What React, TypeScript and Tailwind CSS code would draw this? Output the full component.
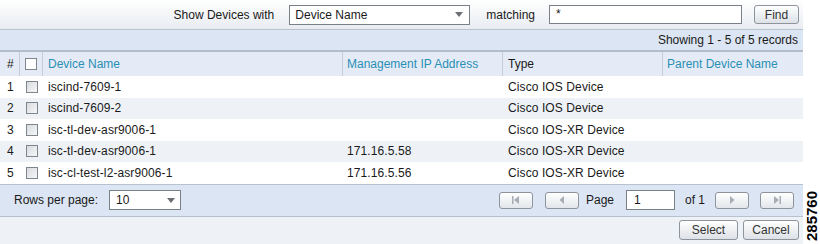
import React from "react";

const font = { fontFamily: '"Liberation Sans", Arial, sans-serif' };

function Caret() {
  return (
    <svg width="8" height="5" viewBox="0 0 8 5" className="shrink-0">
      <path d="M0 0 L8 0 L4 5 Z" fill="#6b6f75" />
    </svg>
  );
}

function Checkbox({ header }: { header?: boolean }) {
  return (
    <div
      className={
        "w-[12px] h-[12px] border border-[#7f858c] " +
        (header ? "bg-white" : "bg-gradient-to-br from-[#d8dbdf] to-[#f6f7f8]")
      }
    />
  );
}

function PagerBtn({ kind }: { kind: "first" | "prev" | "next" | "last" }) {
  return (
    <div className="w-[34px] h-[17px] rounded-[3px] border border-[#8d949c] bg-gradient-to-b from-[#ffffff] to-[#e3e6ea] flex items-center justify-center">
      <svg width="10" height="8" viewBox="0 0 10 8">
        {kind === "first" && (
          <>
            <rect x="1" y="0" width="1.5" height="8" fill="#a7adb5" />
            <path d="M8 0 L8 8 L3 4 Z" fill="#a7adb5" />
          </>
        )}
        {kind === "prev" && <path d="M7 0 L7 8 L2.5 4 Z" fill="#a7adb5" />}
        {kind === "next" && <path d="M3 0 L3 8 L7.5 4 Z" fill="#a7adb5" />}
        {kind === "last" && (
          <>
            <path d="M2 0 L2 8 L7 4 Z" fill="#a7adb5" />
            <rect x="7.5" y="0" width="1.5" height="8" fill="#a7adb5" />
          </>
        )}
      </svg>
    </div>
  );
}

const rows = [
  { n: 1, name: "iscind-7609-1", ip: "", type: "Cisco IOS Device" },
  { n: 2, name: "iscind-7609-2", ip: "", type: "Cisco IOS Device" },
  { n: 3, name: "isc-tl-dev-asr9006-1", ip: "", type: "Cisco IOS-XR Device" },
  { n: 4, name: "isc-tl-dev-asr9006-1", ip: "171.16.5.58", type: "Cisco IOS-XR Device" },
  { n: 5, name: "isc-cl-test-l2-asr9006-1", ip: "171.16.5.56", type: "Cisco IOS-XR Device" },
];

const cols = "grid grid-cols-[20px_23px_300px_160px_160px_140px]";

export default function App() {
  return (
    <div className="w-[820px] h-[244px] bg-white flex text-[12px] text-[#1a1a1a]" style={font}>
      <div className="w-[803px] flex flex-col">
        {/* search bar */}
        <div className="h-[29px] bg-gradient-to-b from-[#ffffff] to-[#e8ecf1] flex items-center justify-end pr-[4px]">
          <span className="mr-[15px]">Show Devices with</span>
          <div className="w-[181px] h-[20px] border border-[#7a8088] bg-white flex items-center justify-between pl-[5px] pr-[6px]">
            <span>Device Name</span>
            <Caret />
          </div>
          <span className="ml-[16px] mr-[14px]">matching</span>
          <div className="w-[193px] h-[19px] border border-[#7a8088] bg-white pl-[6px] leading-[17px]">*</div>
          <div className="ml-[12px] w-[45px] h-[19px] rounded-[3px] border border-[#8d949c] bg-gradient-to-b from-[#ffffff] to-[#dde1e6] flex items-center justify-center text-[#333]">
            Find
          </div>
        </div>
        {/* showing bar */}
        <div className="h-[23px] bg-[#dce5f3] border-t border-[#b8c2ce] border-b-2 border-b-[#b3bdc9] flex items-center justify-end pr-[5px]">
          Showing 1 - 5 of 5 records
        </div>
        {/* header */}
        <div className={cols + " h-[24px] bg-[#e4ebf6] text-[#2a8fb5]"}>
          <div className="flex items-center pl-[7px] text-[#1a1a1a] border-r border-[#c3ccd8]">#</div>
          <div className="flex items-center justify-center border-r border-[#c3ccd8]">
            <Checkbox header />
          </div>
          <div className="flex items-center pl-[5px] border-r border-[#c3ccd8]">Device Name</div>
          <div className="flex items-center pl-[4px] border-r border-[#c3ccd8]">Management IP Address</div>
          <div className="flex items-center pl-[5px] text-[#1a1a1a] border-r border-[#c3ccd8]">Type</div>
          <div className="flex items-center pl-[4px]">Parent Device Name</div>
        </div>
        {/* rows */}
        {rows.map((r, i) => (
          <div
            key={r.n}
            className={cols + " h-[21.5px] tracking-[0.1px] " + (i % 2 === 0 ? "bg-white" : "bg-[#eef2f7]")}
          >
            <div className="flex items-center pl-[7px]">{r.n}</div>
            <div className="flex items-center justify-center">
              <Checkbox />
            </div>
            <div className="flex items-center pl-[5px]">{r.name}</div>
            <div className="flex items-center pl-[4px]">{r.ip}</div>
            <div className="flex items-center pl-[5px]">{r.type}</div>
            <div />
          </div>
        ))}
        {/* footer */}
        <div className="h-[33px] bg-[#dce5f3] border-t border-[#b8c2ce] border-b border-b-[#b8c2ce] flex items-center pl-[14px] pr-[9px]">
          <span>Rows per page:</span>
          <div className="ml-[11px] w-[72px] h-[20px] border border-[#7a8088] bg-white flex items-center justify-between pl-[6px] pr-[5px]">
            <span>10</span>
            <Caret />
          </div>
          <div className="ml-auto flex items-center">
            <PagerBtn kind="first" />
            <div className="ml-[12px]">
              <PagerBtn kind="prev" />
            </div>
            <span className="ml-[7px]">Page</span>
            <div className="ml-[12px] w-[49px] h-[20px] border border-[#7a8088] bg-white pl-[7px] leading-[18px]">1</div>
            <span className="ml-[10px] mr-[10px]">of 1</span>
            <PagerBtn kind="next" />
            <div className="ml-[11px]">
              <PagerBtn kind="last" />
            </div>
          </div>
        </div>
        {/* bottom */}
        <div className="flex-1 bg-[#eef1f5] flex items-center justify-end pr-[4px] gap-[5px]">
          <div className="w-[59px] h-[20px] rounded-[3px] border border-[#8d949c] bg-gradient-to-b from-[#ffffff] to-[#dde1e6] flex items-center justify-center text-[#333]">
            Select
          </div>
          <div className="w-[56px] h-[20px] rounded-[3px] border border-[#8d949c] bg-gradient-to-b from-[#ffffff] to-[#dde1e6] flex items-center justify-center text-[#333]">
            Cancel
          </div>
        </div>
      </div>
      <div className="flex-1 relative">
        <div
          className="absolute left-[1px] bottom-[3px] origin-bottom-left -rotate-90 translate-x-[15px] text-[15px] font-bold text-black leading-[15px] whitespace-nowrap"
          style={{ fontFamily: '"Liberation Sans", Arial, sans-serif' }}
        >
          285760
        </div>
      </div>
    </div>
  );
}
